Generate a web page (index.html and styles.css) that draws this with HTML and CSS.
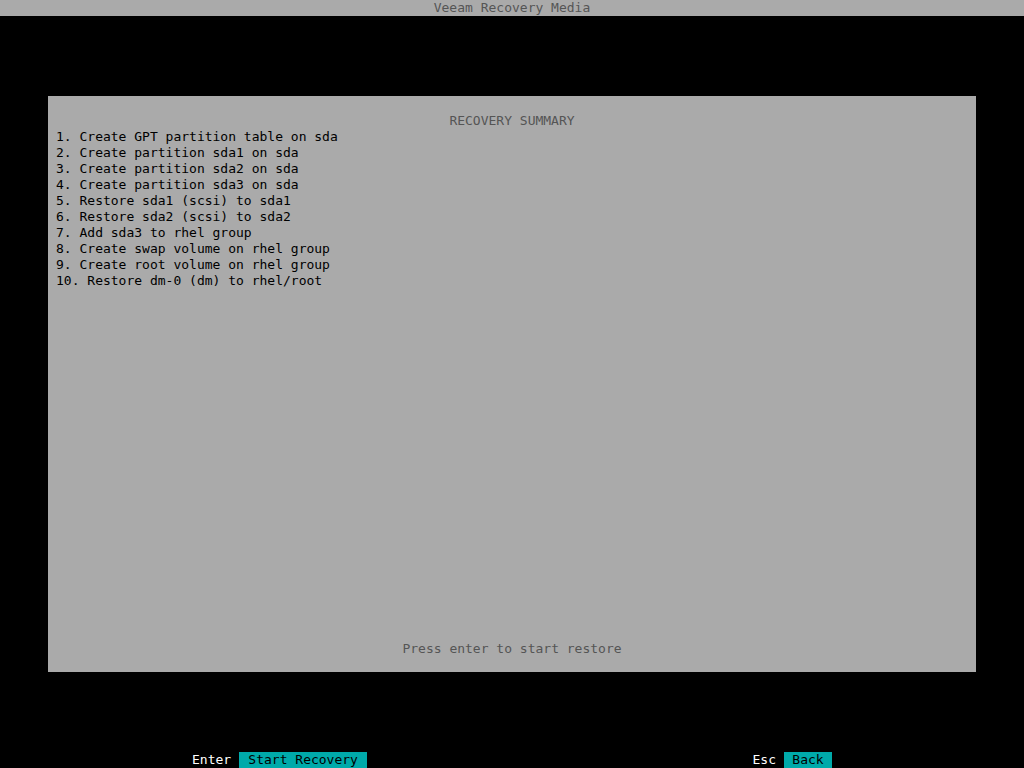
FILE: index.html
```html
<!DOCTYPE html>
<html lang="en">
<head>
<meta charset="utf-8">
<meta name="viewport" content="width=device-width, initial-scale=1">
<title>Veeam Recovery Media</title>
<link rel="stylesheet" href="styles.css">
</head>
<body>
<header class="titlebar">Veeam Recovery Media</header>
<main class="stage">
  <section class="panel">
    <h1 class="panel-title">RECOVERY SUMMARY</h1>
    <div class="steps">
      <div>1. Create GPT partition table on sda</div>
      <div>2. Create partition sda1 on sda</div>
      <div>3. Create partition sda2 on sda</div>
      <div>4. Create partition sda3 on sda</div>
      <div>5. Restore sda1 (scsi) to sda1</div>
      <div>6. Restore sda2 (scsi) to sda2</div>
      <div>7. Add sda3 to rhel group</div>
      <div>8. Create swap volume on rhel group</div>
      <div>9. Create root volume on rhel group</div>
      <div>10. Restore dm-0 (dm) to rhel/root</div>
    </div>
    <p class="hint">Press enter to start restore</p>
  </section>
</main>
<footer class="keys">
  <div class="key"><label for="start">Enter</label><button id="start" class="action action-primary" type="button">Start Recovery</button></div>
  <div class="key"><label for="back">Esc</label><button id="back" class="action" type="button">Back</button></div>
</footer>
</body>
</html>
```
FILE: styles.css
```css
* { box-sizing: border-box; }

body {
  margin: 0;
  min-height: 100vh;
  display: flex;
  flex-direction: column;
  background: #000;
  color: #000;
  font: 13px/16px "DejaVu Sans Mono", monospace;
}

.titlebar {
  background: #aaa;
  color: #555;
  text-align: center;
}

.stage {
  flex: 1;
  display: flex;
  padding: 80px 48px;
}

.panel {
  flex: 1;
  display: flex;
  flex-direction: column;
  padding: 17px 8px 15px;
  background: #aaa;
}

.panel-title {
  margin: 0;
  font: inherit;
  color: #555;
  text-align: center;
}

.steps { flex: 1; }

.hint {
  margin: 0;
  color: #555;
  text-align: center;
}

.keys {
  display: flex;
  justify-content: space-between;
  padding: 0 192px;
  color: #fff;
}

.key {
  display: flex;
  gap: 8px;
}

.action {
  min-width: 48px;
  margin: 0;
  padding: 0 8px;
  border: 0;
  border-radius: 0;
  background: #0aa;
  color: #000;
  font: inherit;
}

.action-primary { min-width: 128px; }
```
